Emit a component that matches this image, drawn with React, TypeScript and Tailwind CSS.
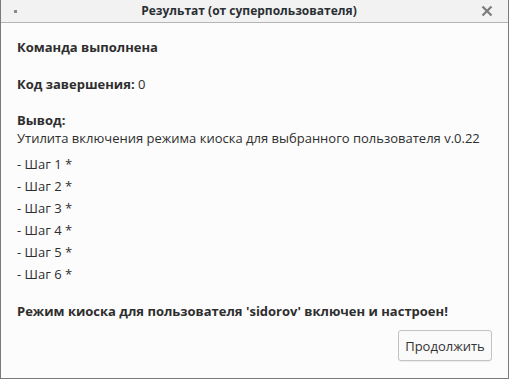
import React from "react";

const steps = [1, 2, 3, 4, 5, 6];

export default function App() {
  return (
    <div
      className="w-[509px] h-[379px] flex flex-col bg-[#fcfcfc] border border-t-0 border-[#7a7a7a] text-[#2e2e2e] text-[13px] leading-[18px]"
      style={{ fontFamily: '"Open Sans", "Noto Sans", sans-serif' }}
    >
      {/* Title bar */}
      <div className="h-[23px] shrink-0 flex items-center px-[13px] bg-[#f2f2f2] border-b border-[#b4b4b4]">
        <div className="w-[3px] h-[3px] bg-[#8a8a8a]" />
        <div className="flex-1 text-center font-bold text-[12px] text-[#2a2f33]">
          Результат (от суперпользователя)
        </div>
        <svg width="12" height="12" viewBox="0 0 12 12" className="mr-[2px]">
          <path d="M1.5 1.5 L10.5 10.5 M10.5 1.5 L1.5 10.5" stroke="#7b7b7b" strokeWidth="2.2" strokeLinecap="butt" />
        </svg>
      </div>

      {/* Body */}
      <div className="flex-1 flex flex-col px-4 pt-[15px] pb-[17px]">
        <p className="font-bold">Команда выполнена</p>
        <p className="mt-[19px]">
          <span className="font-bold">Код завершения:</span> 0
        </p>
        <p className="mt-[18px] font-bold">Вывод:</p>
        <p>Утилита включения режима киоска для выбранного пользователя v.0.22</p>
        <div className="mt-2 flex flex-col gap-1">
          {steps.map((n) => (
            <p key={n}>- Шаг {n} *</p>
          ))}
        </div>
        <p className="mt-[19px] font-bold">Режим киоска для пользователя 'sidorov' включен и настроен!</p>
        <div className="mt-auto flex justify-end">
          <button className="w-[94px] h-[31px] rounded-[3px] border border-[#c3c3c3] bg-[#fafafa] text-[#333] shadow-[0_1px_0_rgba(0,0,0,0.06)]">
            Продолжить
          </button>
        </div>
      </div>
    </div>
  );
}
